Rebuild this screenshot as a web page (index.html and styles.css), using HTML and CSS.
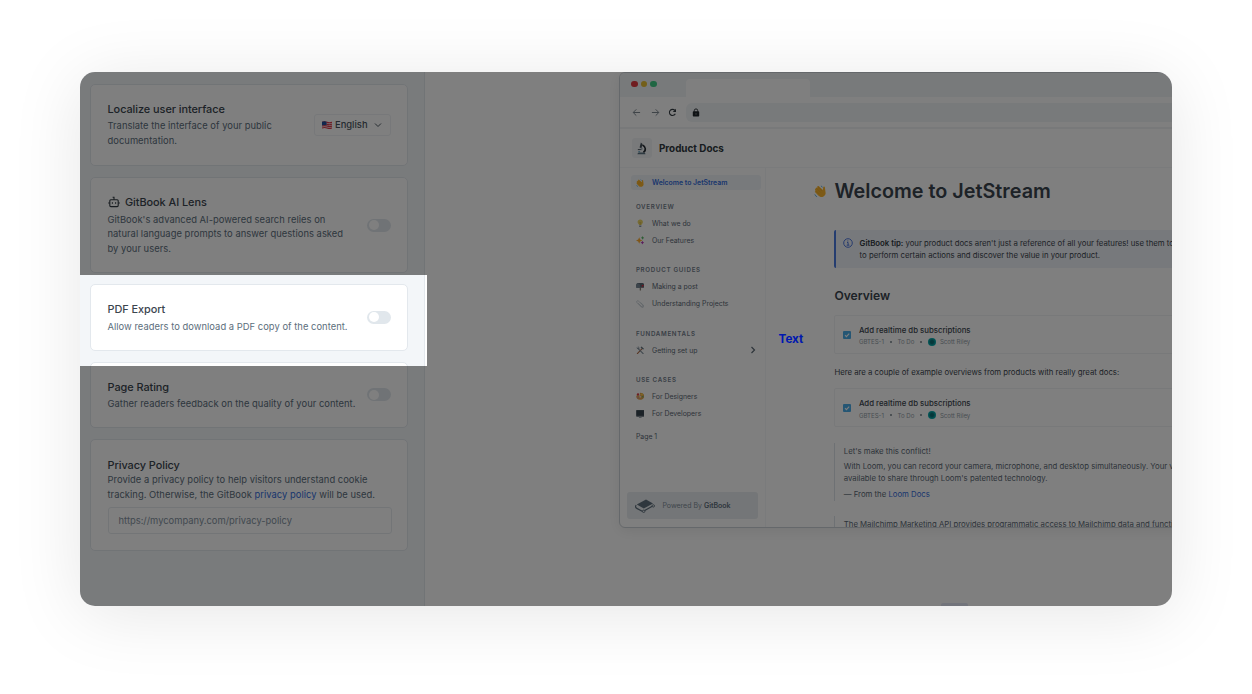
FILE: index.html
```html
<!DOCTYPE html>
<html lang="en">
<head>
<meta charset="utf-8">
<title>PDF Export</title>
<link rel="stylesheet" href="styles.css">
</head>
<body>
<svg class="defs" width="0" height="0">
  <symbol id="wave" viewBox="0 0 16 16">
    <path d="M1.2 5.2 3 3.2l1.2.2L4 1.600l1.700-.3L11 6.300l.3-3.500c.2-1.200 2-1.100 2.100.1l.9 6.900c.2 2.500-2.600 5.200-5.600 4.900-2-.2-3.200-1.600-4.300-2.700L.9 8.300l.9-1z" fill="#fbb52c"/>
    <path d="m3.200 4.200 5 5M2.300 7l4.500 4.500M5 2.600l4.800 5" stroke="#e09a28" stroke-width=".5" fill="none"/>
    <path d="M8.500 1.200c1 .3 1.600.9 1.900 1.800M1 11.500c.5 1.500 1.400 2.500 2.800 3" stroke="#46a5dc" stroke-width="1" fill="none"/>
  </symbol>
  <symbol id="card-check" viewBox="0 0 8 8">
    <rect width="8" height="8" rx="1" fill="#4bade8"/>
    <path d="m2 4.200 1.400 1.400L6.200 2.600" stroke="#fff" stroke-width="1.100" fill="none"/>
  </symbol>
</svg>
<main class="shot">
  <aside class="settings">
    <section class="card card-locale">
      <div class="card-text">
        <h2>Localize user interface</h2>
        <p>Translate the interface of your public<br>documentation.</p>
      </div>
      <button class="select">
        <svg class="flag" viewBox="0 0 10 8"><path d="M0 .8q2.500-1 5 0t5 0v6.400q-2.500 1-5 0t-5 0z" fill="#f3e9ea"/><path d="M0 1.300q2.500-1 5 0t5 0M0 3.200q2.500-1 5 0t5 0M0 5.100q2.500-1 5 0t5 0M0 7q2.500-1 5 0t5 0" stroke="#e0394a" stroke-width="1.100" fill="none"/><path d="M0 .8q2.500-1 4.500-.1v3.600q-2-.8-4.500.1z" fill="#22509c"/></svg>
        <span>English</span>
        <svg class="chev" viewBox="0 0 8 8"><path d="m1 2.500 3 3 3-3" fill="none" stroke="#4c5861" stroke-width="1"/></svg>
      </button>
    </section>
    <section class="card card-lens">
      <div class="card-text">
        <h2><svg class="bot" viewBox="0 0 12 12"><rect x="1.800" y="3.700" width="8.400" height="6.900" rx="1"/><path d="M6 3.700V1.200H4.600M.2 7h1.600M10.200 7h1.600M4.400 6.300v1.500M7.600 6.300v1.500"/></svg>GitBook AI Lens</h2>
        <p>GitBook's advanced AI-powered search relies on<br>natural language prompts to answer questions asked<br>by your users.</p>
      </div>
      <i class="toggle"></i>
    </section>
    <section class="card card-pdf">
      <div class="card-text">
        <h2>PDF Export</h2>
        <p>Allow readers to download a PDF copy of the content.</p>
      </div>
      <i class="toggle"></i>
    </section>
    <section class="card card-rating">
      <div class="card-text">
        <h2>Page Rating</h2>
        <p>Gather readers feedback on the quality of your content.</p>
      </div>
      <i class="toggle"></i>
    </section>
    <section class="card card-privacy">
      <h2>Privacy Policy</h2>
      <p>Provide a privacy policy to help visitors understand cookie<br>tracking. Otherwise, the GitBook <a>privacy policy</a> will be used.</p>
      <div class="input">https://mycompany.com/privacy-policy</div>
    </section>
  </aside>

  <div class="stage">
    <div class="window">
      <div class="tabs">
        <i class="dot red"></i><i class="dot yellow"></i><i class="dot green"></i>
        <i class="tab"></i>
      </div>
      <div class="toolbar">
        <svg class="nav-ico" viewBox="0 0 10 10"><path d="M9 5H1.500M4.800 1.500 1.300 5l3.500 3.500" fill="none" stroke="#7c8790" stroke-width="1.100"/></svg>
        <svg class="nav-ico" viewBox="0 0 10 10"><path d="M1 5h7.500M5.200 1.500 8.700 5 5.200 8.500" fill="none" stroke="#7c8790" stroke-width="1.100"/></svg>
        <svg class="nav-ico reload" viewBox="0 0 10 10"><path d="M8.100 6.300A3.400 3.400 0 1 1 7.600 2.700" fill="none" stroke="#343c42" stroke-width="1.200"/><path d="M8.900.9v3.600H5.300z" fill="#343c42"/></svg>
        <div class="address"><svg viewBox="0 0 8 9"><path d="M2.300 3.800V2.600a1.700 1.700 0 0 1 3.400 0v1.200" fill="none" stroke="#20262b" stroke-width=".9"/><rect x=".8" y="3.300" width="6.400" height="5.200" rx=".7" fill="#20262b"/><circle cx="4" cy="5.900" r=".7" fill="#8b9297"/></svg></div>
      </div>
      <div class="site-head">
        <span class="logo"><svg viewBox="0 0 12 14"><path d="M5.300.5 7.100 2 6 6.800 3.900 6z" fill="#44505b"/><path d="M7 3.200c3.600 1.500 4.300 6 1 8" fill="none" stroke="#262d34" stroke-width="1.800"/><path d="M2 8.200h4.500" stroke="#3c4650" stroke-width="1"/><path d="M1.600 13.300c0-1.500 1-2 2.400-2h4c1.500 0 2.300.7 2.300 2z" fill="#5d7482"/><circle cx="6.200" cy="7.300" r="1.200" fill="#aab6bf"/><path d="M2.500 10.500h2" stroke="#569cba" stroke-width="1.200"/></svg></span>
        <strong>Product Docs</strong>
      </div>
      <div class="site-body">
        <nav class="side">
          <div class="item active"><svg><use href="#wave"/></svg>Welcome to JetStream</div>
          <h4 class="first">OVERVIEW</h4>
          <div class="item"><svg viewBox="0 0 16 16"><path d="M8 .8c3 0 5 2 5 4.700 0 2.500-2.500 3.700-2.700 6H5.700C5.500 9.200 3 8 3 5.500 3 2.800 5 .8 8 .8z" fill="#ecd668"/><path d="M5.800 12h4.400v2.300L8.800 15.500H7.200l-1.400-1.200z" fill="#8b979f"/><path d="M6.500 6 8 7.500 9.500 6M8 7.500V11" stroke="#c39a36" fill="none"/></svg>What we do</div>
          <div class="item"><svg viewBox="0 0 16 16"><path d="m6 2.500 1.800 4.200L12 8.500 7.800 10.300 6 14.500l-1.800-4.200L0 8.500l4.200-1.800z" fill="#ffad33"/><path d="m12.500 0 1.100 2.400L16 3.500l-2.400 1.100L12.500 7l-1.100-2.400L9 3.500l2.400-1.100z" fill="#5bb967"/><path d="m12 9 1.200 2.300 2.300 1.200-2.300 1.200L12 16l-1.200-2.300-2.300-1.200 2.300-1.200z" fill="#b73bb4"/></svg>Our Features</div>
          <h4>PRODUCT GUIDES</h4>
          <div class="item"><svg viewBox="0 0 16 16"><path d="M7 10h2.500v6H7z" fill="#8d8376"/><path d="M4 2h8c2.500 0 3.700 2 3.700 4v5H.5V6C.5 3.500 1.800 2 4 2z" fill="#5a6975"/><path d="M.5 11V6C.5 1.500 7.500 1.500 7.500 6v5z" fill="#788896"/><path d="M11 5.500h3.500v2H12.200v2.700H11z" fill="#e02b3d"/></svg>Making a post</div>
          <div class="item"><svg viewBox="0 0 16 16"><path d="m4 6 6 6c2 1.700 4.200-.4 2.500-2.300L5 2.300C3-.1-.1 2.700 2 5l8 8.300c3 2.500 6-.8 3.600-3.700L8.500 4.500" fill="none" stroke="#a6b3bc" stroke-width="1"/></svg>Understanding Projects</div>
          <h4>FUNDAMENTALS</h4>
          <div class="item"><svg viewBox="0 0 16 16"><path d="m2 15 9.500-10" stroke="#b06c49" stroke-width="2"/><path d="m14 15-9.500-9.500" stroke="#82919e" stroke-width="2"/><path d="m8.500 2.500 2-1.500 4.500 4-1.300 1.500-2-1-1.500-1.500z" fill="#66757f"/><path d="M1.500 2 4 4.200l1-1L3 .8c2.800-.5 4.500 2.500 3 5-2.500 1.500-5.500-.8-4.500-3.800z" fill="#82919e"/></svg>Getting set up<svg class="more" viewBox="0 0 8 8"><path d="m2.500 1 3 3-3 3" fill="none" stroke="#5c6975" stroke-width="1.200"/></svg></div>
          <h4>USE CASES</h4>
          <div class="item"><svg viewBox="0 0 16 16"><path d="M8 1.500c4.500 0 7.500 2.500 7.500 6.500 0 4.500-4 6.700-8 6.700-4.500 0-7-2.700-7-6.200 0-2 1.500-3 3.500-2.400S7.500 7 8 5.500 5.500 2 8 1.500z" fill="#e3a552"/><circle cx="3.800" cy="4.500" r="2.300" fill="#dd3e45"/><circle cx="11" cy="4.800" r="2" fill="#ffd042"/><circle cx="12.800" cy="9" r="1.400" fill="#5bb765"/><circle cx="4" cy="11" r="1.500" fill="#c987a0"/><circle cx="8" cy="9" r="1.800" fill="#f1dfc0"/></svg>For Designers</div>
          <div class="item"><svg viewBox="0 0 16 16"><rect x=".3" y="0" width="15.400" height="12.500" rx="1" fill="#56626c"/><rect x="1.200" y="1" width="13.600" height="9.500" fill="#37444e"/><path d="M6 12.500h4l1 3H5z" fill="#9ca8b0"/></svg>For Developers</div>
          <div class="item page">Page 1</div>
          <div class="powered"><svg viewBox="0 0 20 14"><path d="M1.200 6.200c-1.200 1.200-.6 2.600.6 3.200l6 3.200 9.900-5.600" fill="none" stroke="#5e6e7c" stroke-width="1.200"/><path d="M1.800 5.500 11 .6l7 3.800-9.200 5.200z" fill="#5e6e7c"/><circle cx="18.300" cy="6.900" r="1.200" fill="#e9eef2" stroke="#5e6e7c" stroke-width=".9"/><circle cx="8.700" cy="12.300" r="1.200" fill="#e9eef2" stroke="#5e6e7c" stroke-width=".9"/></svg><span>Powered By <b>GitBook</b></span></div>
        </nav>
        <article class="doc">
          <h1><svg class="h1-ico"><use href="#wave"/></svg>Welcome to JetStream</h1>
          <div class="tip">
            <svg viewBox="0 0 10 10"><circle cx="5" cy="5" r="4.300" fill="none" stroke="#3e6bd9" stroke-width=".9"/><path d="M4 4.500h1.100v2.600M3.700 7.200h2.700M4.800 2.500v1" fill="none" stroke="#3e6bd9" stroke-width=".9"/></svg>
            <p><b>GitBook tip:</b> your product docs aren't just a reference of all your features! use them to<br>to perform certain actions and discover the value in your product.</p>
          </div>
          <h3>Overview</h3>
          <div class="task">
            <svg class="check"><use href="#card-check"/></svg>
            <div><div class="task-title">Add realtime db subscriptions</div><div class="meta"><span>GBTES-1</span><i class="sep"></i><span>To Do</span><i class="sep"></i><i class="avatar"></i><span>Scott Riley</span></div></div>
          </div>
          <p class="para">Here are a couple of example overviews from products with really great docs:</p>
          <div class="task">
            <svg class="check"><use href="#card-check"/></svg>
            <div><div class="task-title">Add realtime db subscriptions</div><div class="meta"><span>GBTES-1</span><i class="sep"></i><span>To Do</span><i class="sep"></i><i class="avatar"></i><span>Scott Riley</span></div></div>
          </div>
          <blockquote>
            <p>Let's make this conflict!</p>
            <p class="q2">With Loom, you can record your camera, microphone, and desktop simultaneously. Your v<br>available to share through Loom's patented technology.</p>
            <p class="q3">— From the <a>Loom Docs</a></p>
          </blockquote>
          <blockquote class="next"><p>The Mailchimp Marketing API provides programmatic access to Mailchimp data and functi</p></blockquote>
        </article>
      </div>
    </div>
    <i class="handle"></i>
  </div>
  <div class="spotlight"></div>
  <div class="label">Text</div>
</main>
</body>
</html>
```
FILE: styles.css
```css
* { box-sizing: border-box; }
body { margin: 0; padding: 72px 80px; height: 694px; background: #fff; overflow: hidden; font-family: Inter, "Liberation Sans", sans-serif; color: #3b454e; }
h1, h2, h3, h4, p, blockquote { margin: 0; }
svg { display: block; flex: none; }
.defs { position: absolute; }
a { color: #346ddb; }

.shot { position: relative; display: flex; width: 1092px; height: 534px; border-radius: 15px; overflow: hidden; background: #fff; }
body::before { content: ""; position: absolute; left: 80px; top: 72px; width: 1092px; height: 534px; border-radius: 15px; box-shadow: 0 8px 70px rgba(0, 0, 0, .1); }

/* Dims everything outside the highlighted setting */
.spotlight { position: absolute; left: 0; top: 203px; width: 347px; height: 91px; box-shadow: 0 0 0 1200px rgba(0, 0, 0, .5); }
.label { position: absolute; left: 698.500px; top: 258.500px; font-size: 11.700px; line-height: 16px; font-weight: 700; color: #0018b0; }

/* Settings column */
.settings { flex: none; width: 345px; padding: 12px 16px 0 10px; background: #f3f6f9; border-right: 1px solid #e3e8ed; display: flex; flex-direction: column; gap: 11px; }
.card { flex: none; width: 318px; background: #fff; border: 1px solid #e3e8ed; border-radius: 5px; padding: 0 16px 0 16.500px; display: flex; align-items: center; justify-content: space-between; }
.card h2 { display: flex; align-items: center; font-size: 10.900px; line-height: 16px; font-weight: 500; letter-spacing: -.05px; color: #3b454e; white-space: nowrap; }
.card p { font-size: 9.400px; line-height: 14.800px; letter-spacing: .03px; color: #5c6e7c; white-space: nowrap; margin-top: 2.500px; }
.card-locale { height: 82px; }
.card-lens { height: 96px; }
.card-pdf, .card-rating { height: 66.600px; }
.card-pdf .card-text, .card-rating .card-text, .card-lens .card-text { padding-top: 1px; }
.card-privacy { height: 112px; display: block; padding-top: 17px; }
.card-privacy p { margin-top: 0; }
.bot { width: 12px; height: 12px; margin-right: 5.500px; fill: none; stroke: #303940; stroke-width: 1.100; }
.toggle { flex: none; width: 24px; height: 13px; border-radius: 7px; background: #e1e7ec; padding: 1.500px; }
.toggle::before { content: ""; display: block; width: 10px; height: 10px; border-radius: 50%; background: #fff; }
.select { display: flex; align-items: center; width: 77px; height: 22px; padding: 0 8px 0 7px; border: 1px solid #eef1f4; border-radius: 3px; background: #fff; font: 500 9.400px/14px Inter, sans-serif; color: #4a555e; }
.flag { width: 10px; height: 8px; margin-right: 3px; }
.chev { width: 8px; height: 8px; margin-left: auto; }
.input { width: 284px; height: 27px; margin-top: 4.400px; padding: 0 10px; border: 1px solid #e6ebef; border-radius: 3px; font-size: 9.400px; line-height: 25px; color: #8492a0; }

/* Preview area */
.stage { position: relative; flex: 1; min-width: 0; padding: 0 0 0 194.400px; }
.window { width: 640px; height: 456px; border: 1px solid #cbd1d6; border-radius: 6px; overflow: hidden; background: #fff; box-shadow: 0 3px 14px rgba(0, 0, 0, .08); }
.handle { position: absolute; left: 516px; bottom: 0; width: 27px; height: 3px; border-radius: 2px 2px 0 0; background: #e4e8f6; }
.tabs { height: 24px; background: #f1f4f7; display: flex; align-items: flex-start; padding-left: 11px; gap: 3px; }
.dot { width: 6.400px; height: 6.400px; margin-top: 8px; border-radius: 50%; }
.red { background: #e03a40; }
.yellow { background: #e6be32; }
.green { background: #40cc87; }
.tab { width: 124px; height: 18px; margin: 6px 0 0 26px; background: #fff; border-radius: 4px 4px 0 0; }
.toolbar { height: 32px; border-bottom: 2px solid #f0f2f4; display: flex; align-items: center; padding-left: 11.500px; }
.nav-ico { width: 9px; height: 9px; margin-right: 10px; }
.reload { margin: 0 9px 0 -2px; }
.address { flex: 1; height: 19px; border-radius: 6px 0 0 6px; background: #f1f4f7; padding: 5px 0 0 6px; }
.address svg { width: 8px; height: 9px; }
.site-head { height: 39px; border-bottom: 1px solid #f4f6f8; display: flex; align-items: center; padding-left: 11.500px; gap: 7px; font-size: 9.900px; color: #303940; }
.site-head strong { font-weight: 700; }
.logo { width: 20px; height: 20px; border-radius: 3px; background: #f3f5f7; display: grid; place-items: center; }
.logo svg { width: 11px; height: 13px; }
.site-body { display: flex; height: 360px; }
.side { position: relative; flex: none; width: 146px; border-right: 1px solid #f4f6f8; padding: 7.300px 4px 0 10.500px; }
.item { display: flex; align-items: center; height: 17.300px; padding: 0 5px; font-size: 6.900px; color: #5c6975; white-space: nowrap; }
.item svg { width: 8.500px; height: 8.500px; margin-right: 7.600px; }
.item .more { width: 8px; height: 8px; margin: 0 -1px 0 auto; }
.item.active { height: 15px; border-radius: 3px; background: #f1f4f8; color: #346ddb; font-weight: 600; }
.side h4 { height: 14px; margin: 14.400px 0 .6px 5px; font-size: 6.200px; line-height: 14px; font-weight: 600; letter-spacing: .7px; color: #73808c; }
.side h4.first { margin-top: 9.500px; }
.item.page { margin-top: 5.400px; }
.powered { position: absolute; left: 7px; top: 324px; width: 131px; height: 27px; border-radius: 3px; background: #e9edf0; display: flex; align-items: center; gap: 7px; padding-left: 8px; font-size: 7px; color: #7e8c98; }
.powered svg { width: 20px; height: 14px; }
.powered b { color: #5e6e7c; font-weight: 600; }

.doc { flex: none; padding-left: 68px; white-space: nowrap; font-size: 7.780px; color: #3b454e; }
.doc h1 { position: relative; margin-top: 9px; font-size: 19.800px; line-height: 28px; font-weight: 600; color: #3b454e; }
.h1-ico { position: absolute; left: -20.500px; top: 7.500px; width: 13px; height: 13px; }
.tip { display: flex; width: 500px; height: 38px; margin-top: 25px; padding: 8px 0 0 6.500px; gap: 6.700px; border-left: 2px solid #4a7ae0; border-radius: 2px; background: #eff2f8; }
.tip svg { width: 10px; height: 10px; }
.tip p { line-height: 11.800px; }
.tip b { font-weight: 600; color: #303940; }
.doc h3 { margin-top: 19px; font-size: 12.100px; line-height: 18px; font-weight: 600; color: #3b454e; }
.task { display: flex; width: 500px; height: 39px; margin-top: 9.700px; padding: 9px 0 0 7.500px; gap: 8px; border: 1px solid #f1f3f5; border-radius: 2px; }
.check { width: 8px; height: 8px; margin-top: 6px; }
.task-title { font-size: 7.800px; line-height: 11px; font-weight: 500; }
.meta { display: flex; align-items: center; height: 12px; font-size: 6.100px; color: #929da6; }
.sep { width: 2px; height: 2px; margin: 0 5.800px; border-radius: 50%; background: #77838d; }
.avatar { width: 8px; height: 8px; margin-right: 4px; border-radius: 50%; background: radial-gradient(circle, #0a6e74 25%, #05a8aa 60%); }
.para { margin-top: 12px; line-height: 12px; }
.para + .task { margin-top: 10.700px; }
blockquote { margin-top: 15.500px; height: 58px; border-left: 1.500px solid #dde3e8; padding: 2px 0 0 8.400px; color: #5c6975; line-height: 12px; }
.q2 { margin-top: 3.200px; }
.q3 { margin-top: 3.500px; }
.next { margin-top: 15.500px; }
```
